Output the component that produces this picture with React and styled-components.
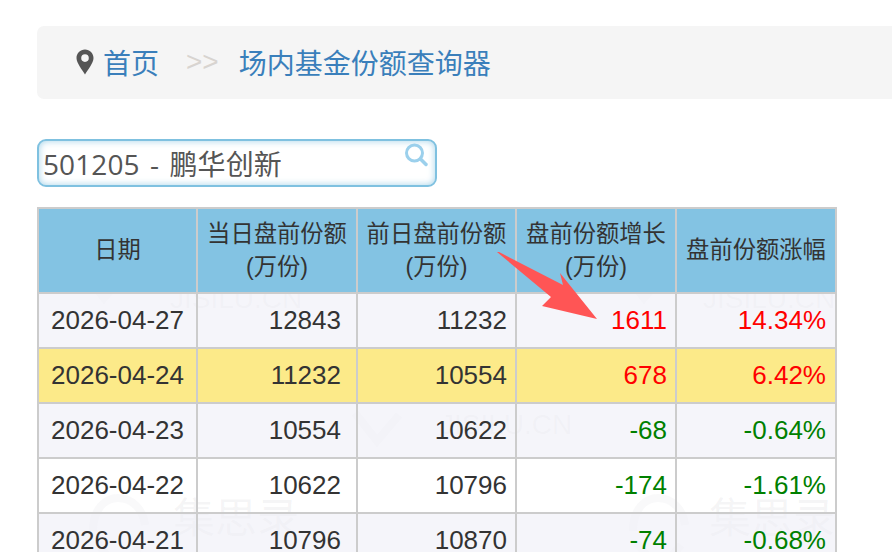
import React from 'react';
import styled, { createGlobalStyle } from 'styled-components';

const GlobalStyle = createGlobalStyle`
  html, body {
    margin: 0;
    padding: 0;
    background: #fff;
    overflow: hidden;
  }
  body {
    font-family: "Liberation Sans", "Noto Sans CJK SC", sans-serif;
    color: #333;
  }
`;

const Page = styled.div`
  width: 892px;
  height: 552px;
  overflow: hidden;
  padding: 26px 0 0 37px;
  box-sizing: border-box;
`;

const Breadcrumb = styled.nav`
  display: flex;
  align-items: center;
  width: 880px;
  height: 73px;
  padding-left: 39px;
  padding-bottom: 2px;
  box-sizing: border-box;
  background: #f5f5f5;
  border-radius: 7px;
  font-family: "Noto Sans CJK SC", sans-serif;
  font-size: 28px;
`;

const Crumb = styled.a`
  color: #3a7fbb;
  text-decoration: none;
  margin-left: ${p => (p.$first ? '9px' : '0')};
`;

const Separator = styled.span`
  font-family: "Liberation Sans", sans-serif;
  color: #d8d4d0;
  font-size: 28px;
  margin: 0 20px 0 27px;
`;

const SearchBox = styled.div`
  display: flex;
  align-items: center;
  justify-content: space-between;
  width: 400px;
  height: 48px;
  margin-top: 40px;
  padding: 0 6px 0 4px;
  box-sizing: border-box;
  border: 2px solid #7fc1e0;
  border-radius: 9px;
  box-shadow: inset 0 0 7px rgba(127, 193, 224, 0.7);
  font-family: "Open Sans", "Noto Sans CJK SC", sans-serif;
  font-size: 28px;
  letter-spacing: 0.1px;
  word-spacing: 3px;
  color: #555;
`;

const SearchSvg = styled.svg`
  margin-top: -16px;
`;

const TableWrap = styled.div`
  position: relative;
  width: 800px;
  margin-top: 20px;
  overflow: hidden;
`;

const Table = styled.table`
  position: relative;
  z-index: 1;
  width: 800px;
  table-layout: fixed;
  border-collapse: collapse;
  border: 2px solid #ccc;
`;

const Col = styled.col`
  width: ${p => p.$w}px;
`;

const Th = styled.th`
  height: 83px;
  padding: 0 6px;
  border: 2px solid #ccc;
  background: #83c3e3;
  font-size: 23.3px;
  font-weight: 400;
  line-height: 33px;
  color: #333;
  text-align: center;
  white-space: nowrap;
`;

const Row = styled.tr`
  height: 55px;
  background: ${p => (p.$highlight ? '#fcea89' : p.$odd ? 'rgba(238, 238, 246, 0.6)' : 'transparent')};
`;

const Td = styled.td`
  padding: 0 ${p => p.$pr || 9}px 0 12px;
  border: 2px solid #ccc;
  font-size: 26px;
  text-align: ${p => (p.$left ? 'left' : 'right')};
  color: ${p => p.$color || '#333'};
  white-space: nowrap;
`;

/* the site's faint repeating watermark, sits behind the table */
const WatermarkLayer = styled.div`
  position: absolute;
  inset: 0;
  display: flex;
  flex-direction: column;
`;

const WatermarkRow = styled.div`
  display: flex;
  flex: none;
  height: ${p => p.$h}px;
  padding-left: ${p => p.$left}px;
  margin-top: ${p => p.$top || 0}px;
`;

const WatermarkTile = styled.div`
  display: flex;
  flex: none;
  width: 540px;
  gap: ${p => p.$gap}px;
`;

const WatermarkText = styled.span`
  margin-top: ${p => p.$drop}px;
  font-size: ${p => p.$size}px;
  line-height: 1;
  color: rgba(110, 110, 120, 0.07);
  white-space: nowrap;
`;

const ArrowSvg = styled.svg`
  position: absolute;
  z-index: 2;
  left: 455px;
  top: 40px;
`;

const PinIcon = () => (
  <svg width="18" height="26" viewBox="0 0 18 26">
    <path
      fill="#555"
      fillRule="evenodd"
      d="M9 .5C4.2.5.5 4.2.5 9c0 5 5.5 11.500 8.500 16.500C12 20.500 17.500 14 17.500 9 17.500 4.200 13.800.5 9 .5ZM9 5.300a3.800 3.800 0 1 1 0 7.600 3.800 3.800 0 0 1 0-7.600Z"
    />
  </svg>
);

const SearchIcon = () => (
  <SearchSvg width="25" height="25" viewBox="0 0 25 25" fill="none">
    <circle cx="10.500" cy="10" r="8" stroke="#9bd0ec" strokeWidth="3" />
    <path d="M16.500 16l5.500 5.500" stroke="#9bd0ec" strokeWidth="3.500" strokeLinecap="round" />
  </SearchSvg>
);

const Logo = () => (
  <svg width="64" height="84" viewBox="0 0 64 84" fill="none">
    <path
      d="M6 38C6 16 18 5 31 5 45 5 56 16 58 32M10 50 32 78 54 52"
      stroke="rgba(110, 110, 120, 0.04)"
      strokeWidth="8"
    />
  </svg>
);

const Tile = ({ gap, drop, size, children }) => (
  <WatermarkTile $gap={gap}>
    <Logo />
    <WatermarkText $drop={drop} $size={size}>{children}</WatermarkText>
  </WatermarkTile>
);

const UP = '#f00';
const DOWN = '#008000';

const colWidths = [159, 160, 159, 160, 160];

const rows = [
  ['2026-04-27', '12843', '11232', '1611', '14.34%', UP],
  ['2026-04-24', '11232', '10554', '678', '6.42%', UP],
  ['2026-04-23', '10554', '10622', '-68', '-0.64%', DOWN],
  ['2026-04-22', '10622', '10796', '-174', '-1.61%', DOWN],
  ['2026-04-21', '10796', '10870', '-74', '-0.68%', DOWN],
];

export default function App() {
  return (
    <Page>
      <GlobalStyle />
      <Breadcrumb>
        <PinIcon />
        <Crumb href="#" $first>首页</Crumb>
        <Separator>&gt;&gt;</Separator>
        <Crumb href="#">场内基金份额查询器</Crumb>
      </Breadcrumb>

      <SearchBox>
        <span>501205 - 鹏华创新</span>
        <SearchIcon />
      </SearchBox>

      <TableWrap>
        <WatermarkLayer>
          <WatermarkRow $top={13} $h={143} $left={35}>
            <Tile gap={34} drop={65} size={28}>JISILU.CN</Tile>
            <Tile gap={27} drop={65} size={28}>JISILU.CN</Tile>
          </WatermarkRow>
          <WatermarkRow $h={130} $left={308}>
            <Tile gap={31} drop={48} size={28}>JISILU.CN</Tile>
          </WatermarkRow>
          <WatermarkRow $h={90} $left={50}>
            <Tile gap={22} drop={5} size={42}>集思录</Tile>
            <Tile gap={18} drop={5} size={42}>集思录</Tile>
          </WatermarkRow>
        </WatermarkLayer>

        <Table>
          <colgroup>
            {colWidths.map((w, i) => <Col key={i} $w={w} />)}
          </colgroup>
          <thead>
            <tr>
              <Th>日期</Th>
              <Th>当日盘前份额<br />(万份)</Th>
              <Th>前日盘前份额<br />(万份)</Th>
              <Th>盘前份额增长<br />(万份)</Th>
              <Th>盘前份额涨幅</Th>
            </tr>
          </thead>
          <tbody>
            {rows.map((r, i) => (
              <Row key={r[0]} $highlight={i === 1} $odd={i % 2 === 0}>
                <Td $left>{r[0]}</Td>
                <Td $pr={15}>{r[1]}</Td>
                <Td $pr={8}>{r[2]}</Td>
                <Td $pr={8} $color={r[5]}>{r[3]}</Td>
                <Td $color={r[5]}>{r[4]}</Td>
              </Row>
            ))}
          </tbody>
        </Table>

        <ArrowSvg width="150" height="90" viewBox="0 0 150 90">
          <polygon
            fill="#ff5555"
            points="5,5 7,5 71,38 68,26 105,72 50,59 59,50"
          />
        </ArrowSvg>
      </TableWrap>
    </Page>
  );
}
